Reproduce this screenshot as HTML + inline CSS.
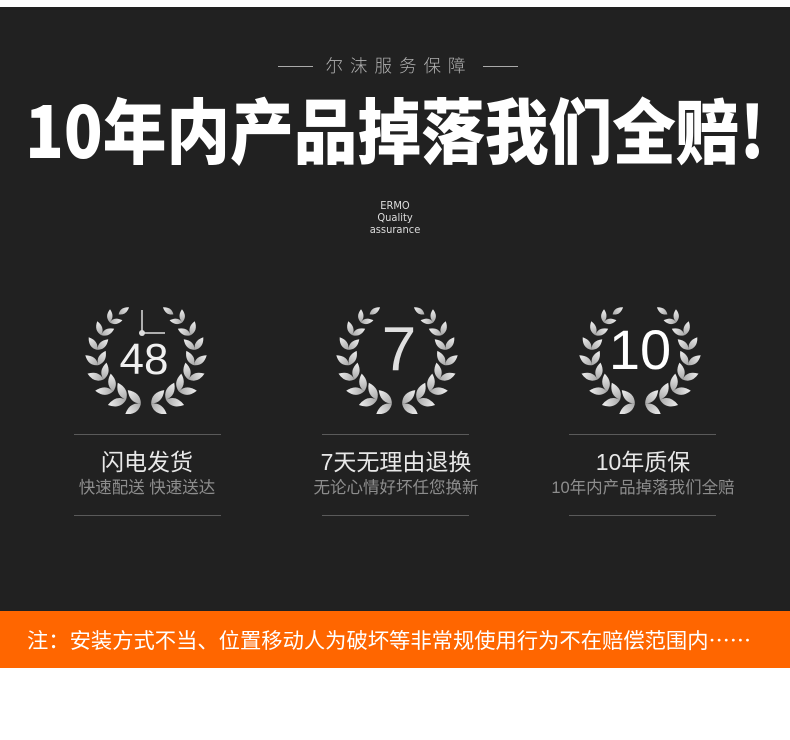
<!DOCTYPE html>
<html><head><meta charset="utf-8"><style>
*{margin:0;padding:0;box-sizing:border-box}
body{width:790px;height:740px;background:#fff;position:relative;overflow:hidden;font-family:"Liberation Sans","Noto Sans CJK SC",sans-serif}
#dark{position:absolute;left:0;top:7px;width:790px;height:604px;background:#212121}
.abs{position:absolute}
#sub{left:4px;width:790px;top:54px;text-align:center;color:#b0b0b0;font-size:17.5px;letter-spacing:7px;font-weight:300;line-height:24px}
.hl{position:absolute;top:66px;height:1px;width:35px;background:#aaa}
#big{left:0;width:790px;top:88px;text-align:center;color:#fff;font-size:66px;font-weight:900;letter-spacing:0px;line-height:80px;transform:scale(0.965,1.08);font-family:"Noto Sans CJK SC",sans-serif;white-space:nowrap}
#ermo{left:0;width:790px;top:200px;text-align:center;color:#ddd;font-size:11px;line-height:12px;font-family:"DejaVu Sans Condensed","Liberation Sans",sans-serif}
.sep{position:absolute;height:1px;background:#5a5a5a;width:147px}
.t{position:absolute;width:250px;text-align:center;color:#e8e8e8;font-size:23px;top:448px;line-height:28px;font-family:"Liberation Sans","Noto Sans CJK SC",sans-serif}
.s{position:absolute;width:250px;text-align:center;color:#8d8d8d;font-size:16.5px;top:477px;line-height:22px;font-family:"Liberation Sans","Noto Sans CJK SC",sans-serif}
#bar{position:absolute;left:0;top:611px;width:790px;height:57px;background:#ff6600;color:#fff;font-size:21.3px;line-height:57px;padding-left:27px;font-family:"Noto Sans CJK SC",sans-serif;white-space:nowrap}
.num{position:absolute;color:#fff;font-family:"Liberation Sans",sans-serif;text-align:center;width:120px}
</style></head><body>
<div id="dark"></div>
<div class="hl" style="left:278px"></div><div class="hl" style="left:483px"></div>
<div id="sub" class="abs">尔沫服务保障</div>
<div id="big" class="abs">10年内产品掉落我们全赔!</div>
<div id="ermo" class="abs">ERMO<br>Quality<br>assurance</div>

<svg width="0" height="0" style="position:absolute">
<defs>
<linearGradient id="g" x1="0" y1="0" x2="0" y2="1"><stop offset="0" stop-color="#f0f0f0"/><stop offset="1" stop-color="#a8a8a8"/></linearGradient>
<path id="lf" d="M0 0 Q7.5 -8 0 -18 Q-7.5 -8 0 0Z"/>
<g id="leaf"><use href="#lf" transform="rotate(140)"/><use href="#lf" transform="rotate(220)"/></g>
<g id="branch" fill="url(#g)">
<g transform="translate(61 51)">
<use href="#leaf" transform="rotate(96) translate(49 0) scale(1.05)"/>
<use href="#leaf" transform="rotate(114) translate(49 0) scale(1.05)"/>
<use href="#leaf" transform="rotate(132) translate(49 0) scale(1)"/>
<use href="#leaf" transform="rotate(150) translate(49 0) scale(0.95)"/>
<use href="#leaf" transform="rotate(168) translate(49 0) scale(0.9)"/>
<use href="#leaf" transform="rotate(186) translate(49 0) scale(0.85)"/>
<use href="#leaf" transform="rotate(204) translate(49 0) scale(0.8)"/>
<use href="#leaf" transform="rotate(222) translate(49 0) scale(0.72)"/>
<use href="#lf" transform="rotate(236) translate(49 0) rotate(180) scale(0.7)"/>
</g></g>
<g id="wreath"><use href="#branch"/><use href="#branch" transform="translate(122 0) scale(-1 1)"/></g>
</defs></svg>

<svg class="abs" style="left:85px;top:304px" width="122" height="110"><use href="#wreath"/></svg>
<svg class="abs" style="left:336px;top:304px" width="122" height="110"><use href="#wreath"/></svg>
<svg class="abs" style="left:579px;top:304px" width="122" height="110"><use href="#wreath"/></svg>

<svg class="abs" style="left:130px;top:308px" width="40" height="32"><line x1="12" y1="2" x2="12" y2="25" stroke="#ddd" stroke-width="1.5"/><line x1="12" y1="25" x2="35" y2="25" stroke="#ddd" stroke-width="1.5"/><circle cx="12" cy="25" r="3" fill="#ddd"/></svg>
<div class="num" style="left:84px;top:337px;font-size:44px;line-height:46px;color:#f0f0f0">48</div>
<div class="num" style="left:339px;top:318px;font-size:62px;line-height:64px;color:#e0e0e0">7</div>
<div class="num" style="left:580px;top:320px;font-size:56px;line-height:60px">10</div>

<div class="sep" style="left:74px;top:434px"></div><div class="sep" style="left:322px;top:434px"></div><div class="sep" style="left:569px;top:434px"></div>
<div class="sep" style="left:74px;top:515px"></div><div class="sep" style="left:322px;top:515px"></div><div class="sep" style="left:569px;top:515px"></div>

<div class="t" style="left:22px">闪电发货</div>
<div class="t" style="left:271px">7天无理由退换</div>
<div class="t" style="left:518px">10年质保</div>
<div class="s" style="left:22px">快速配送 快速送达</div>
<div class="s" style="left:271px">无论心情好坏任您换新</div>
<div class="s" style="left:518px">10年内产品掉落我们全赔</div>

<div id="bar">注：安装方式不当、位置移动人为破坏等非常规使用行为不在赔偿范围内……</div>
</body></html>
